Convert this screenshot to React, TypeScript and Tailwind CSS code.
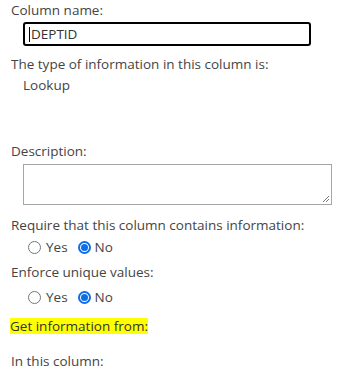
function Radio({ checked }: { checked: boolean }) {
  if (checked) {
    return (
      <span className="flex size-[13px] items-center justify-center rounded-full border-2 border-[#0a6fe8] bg-white">
        <span className="size-[7px] rounded-full bg-[#0a6fe8]" />
      </span>
    );
  }
  return <span className="size-[13px] rounded-full border border-[#767676] bg-white" />;
}

function YesNo() {
  return (
    <div className="flex h-[20px] items-center pl-[17px]">
      <Radio checked={false} />
      <span className="ml-[5px]">Yes</span>
      <span className="ml-[10px]">
        <Radio checked />
      </span>
      <span className="ml-[4px]">No</span>
    </div>
  );
}

export default function App() {
  return (
    <div className="h-[371px] w-[348px] bg-white pl-[11px] font-['Open_Sans',sans-serif] text-[13.5px] leading-[20px] text-[#444]">
      <div>Column name:</div>
      <div className="mt-[2px] ml-[12px] flex h-[24px] w-[288px] items-center rounded-[3px] border-2 border-black pl-[4px] text-[#333]">
        <span className="mr-[1px] h-[15px] w-px bg-black" />
        DEPTID
      </div>
      <div className="mt-[8px]">The type of information in this column is:</div>
      <div className="mt-[1px] pl-[12px]">Lookup</div>
      <div className="mt-[46px]">Description:</div>
      <div className="relative mt-[3px] ml-[12px] h-[41px] w-[309px] border border-[#a6a6a6]">
        <svg className="absolute right-[1px] bottom-[1px]" width="8" height="8" viewBox="0 0 8 8">
          <path d="M7 1 L1 7 M7 4 L4 7" stroke="#777" strokeWidth="1" />
        </svg>
      </div>
      <div className="mt-[10px]">Require that this column contains information:</div>
      <div className="mt-[2px]">
        <YesNo />
      </div>
      <div className="mt-[5px]">Enforce unique values:</div>
      <div className="mt-[5px]">
        <YesNo />
      </div>
      <div className="mt-[9px] -ml-px">
        <span className="inline-block bg-[#ffff00] leading-[16px] text-[#333]">Get information from:</span>
      </div>
      <div className="mt-[15px]">In this column:</div>
    </div>
  );
}
